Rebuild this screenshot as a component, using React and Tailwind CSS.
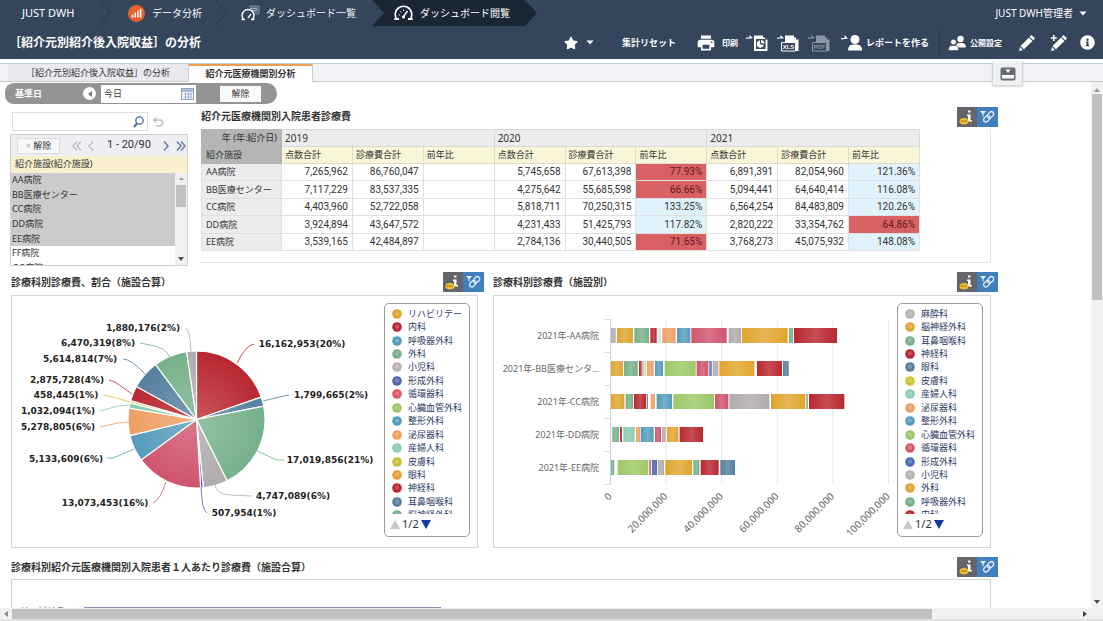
import React, { useState } from "react";
import { FaStar, FaInfoCircle } from "react-icons/fa";
import { MdPrint } from "react-icons/md";

const C = {
    red: "#b9272f",
    steel: "#55809f",
    green: "#76b18a",
    gray: "#b0abac",
    indigo: "#4a67b0",
    pink: "#cf546d",
    blue: "#559cbd",
    orange: "#ee9f62",
    mint: "#8accb4",
    yellow: "#d9c03a",
    gold: "#e0a52f",
    lime: "#9cc867",
};

const hospitals = ["AA病院", "BB医療センター", "CC病院", "DD病院", "EE病院", "FF病院", "GG病院"];

const tableRows = [
    ["AA病院", "7,265,962", "86,760,047", "", "5,745,658", "67,613,398", "77.93%", "6,891,391", "82,054,960", "121.36%"],
    ["BB医療センター", "7,117,229", "83,537,335", "", "4,275,642", "55,685,598", "66.66%", "5,094,441", "64,640,414", "116.08%"],
    ["CC病院", "4,403,960", "52,722,058", "", "5,818,711", "70,250,315", "133.25%", "6,564,254", "84,483,809", "120.26%"],
    ["DD病院", "3,924,894", "43,647,572", "", "4,231,433", "51,425,793", "117.82%", "2,820,222", "33,354,762", "64.86%"],
    ["EE病院", "3,539,165", "42,484,897", "", "2,784,136", "30,440,505", "71.65%", "3,768,273", "45,075,932", "148.08%"],
];

// value, label, colour, label centre, leader line
const slices = [
    [16162953, "16,162,953(20%)", C.red, 302, 344, "M237 363 Q246 345 254 344"],
    [1799665, "1,799,665(2%)", C.steel, 331, 395, "M263 401 L284 396 L289 395"],
    [17019856, "17,019,856(21%)", C.green, 330, 460, "M257 451 L277 460 L284 460"],
    [4747089, "4,747,089(6%)", C.gray, 293, 496, "M215 485 Q216 494 230 495 L252 496"],
    [507954, "507,954(1%)", C.indigo, 244, 513, "M201 487 Q202 511 207 513"],
    [13073453, "13,073,453(16%)", C.pink, 105, 503, "M166 482 Q160 500 153 503"],
    [5133609, "5,133,609(6%)", C.blue, 66, 459, "M134 449 L113 458 L107 458"],
    [5278805, "5,278,805(6%)", C.orange, 58, 427, "M129 422 L118 423 L100 427"],
    [1032094, "1,032,094(1%)", C.mint, 58, 411, "M129 405 L118 406 L100 411"],
    [458445, "458,445(1%)", C.yellow, 66, 395, "M130 402 L113 397 L103 395"],
    [2875728, "2,875,728(4%)", C.red, 67, 380, "M132 394 L115 382 L109 380"],
    [5614814, "5,614,814(7%)", C.steel, 80, 359, "M145 374 Q131 359 123 359"],
    [6470319, "6,470,319(8%)", C.green, 98, 343, "M170 358 Q166 347 150 345 L140 343"],
    [1880176, "1,880,176(2%)", C.gray, 143, 328, "M191 352 Q190 328 185 328"],
];

const pieLegend = [
    ["リハビリテー", C.gold],
    ["内科", C.red],
    ["呼吸器外科", C.blue],
    ["外科", C.green],
    ["小児科", "#c0b0b8"],
    ["形成外科", "#5467ad"],
    ["循環器科", "#dc5568"],
    ["心臓血管外科", C.lime],
    ["整形外科", C.blue],
    ["泌尿器科", C.orange],
    ["産婦人科", C.mint],
    ["皮膚科", "#c9bd35"],
    ["眼科", "#e8a03a"],
    ["神経科", C.red],
    ["耳鼻咽喉科", C.steel],
    ["脳神経外科", C.green],
];

const barLegend = [
    ["麻酔科", "#b5b5b5"],
    ["脳神経外科", C.gold],
    ["耳鼻咽喉科", C.green],
    ["神経科", C.red],
    ["眼科", C.steel],
    ["皮膚科", "#c9c832"],
    ["産婦人科", C.mint],
    ["泌尿器科", C.orange],
    ["整形外科", C.blue],
    ["心臓血管外科", C.lime],
    ["循環器科", "#d8576c"],
    ["形成外科", "#4c6fb4"],
    ["小児科", "#b8b4b0"],
    ["外科", C.gold],
    ["呼吸器外科", C.green],
    ["内科", C.red],
];

// segments are [start, end, colour]; 500 units = 60,000,000
const bars = [
    {
        label: "2021年-AA病院",
        y: 328,
        segs: [[0, 14, C.gray], [18, 66, C.gold], [70, 114, C.green], [118, 137, C.red], [140, 150, "#cfe6e2"], [154, 194, C.orange], [198, 238, C.blue], [241, 347, C.pink], [353, 390, C.gray], [393, 530, C.gold], [534, 546, C.green], [549, 678, C.red]],
    },
    {
        label: "2021年-BB医療センタ…",
        y: 361,
        segs: [[0, 36, C.gold], [39, 80, C.green], [84, 92, C.red], [94, 98, C.gray], [101, 104, C.yellow], [108, 128, C.orange], [132, 156, C.blue], [161, 254, C.lime], [257, 292, C.pink], [295, 302, C.indigo], [305, 322, C.gray], [325, 430, C.gold], [438, 513, C.red], [516, 533, C.steel]],
    },
    {
        label: "2021年-CC病院",
        y: 394,
        segs: [[0, 40, C.gold], [44, 66, C.green], [69, 105, C.red], [107, 111, C.steel], [119, 132, C.orange], [137, 183, C.blue], [187, 309, C.lime], [312, 352, C.pink], [355, 475, C.gray], [480, 583, C.gold], [586, 591, C.green], [594, 700, C.red]],
    },
    {
        label: "2021年-DD病院",
        y: 427,
        segs: [[4, 24, C.green], [27, 33, C.red], [37, 71, C.mint], [75, 87, C.orange], [89, 128, C.blue], [132, 150, C.pink], [153, 164, C.gray], [168, 202, C.gold], [206, 276, C.red]],
    },
    {
        label: "2021年-EE病院",
        y: 460,
        segs: [[0, 10, C.green], [20, 112, C.lime], [115, 120, C.pink], [123, 138, C.indigo], [141, 159, C.gray], [163, 243, C.gold], [247, 265, C.green], [269, 323, C.red], [328, 372, C.steel]],
    },
];

const ticks = ["0", "20,000,000", "40,000,000", "60,000,000", "80,000,000", "100,000,000"];

const Chevron = () => (
    <svg width="13" height="26" viewBox="0 0 13 26" fill="none" className="shrink-0">
        <path d="M0 0 L12 13 L0 26" stroke="#2c3b50" strokeWidth="2" />
        <path d="M1 0 L13 13 L1 26" stroke="#3d5069" strokeWidth="1" />
    </svg>
);

const Gauge = ({ size }) => (
    <svg width={size} height="16" viewBox="0 0 20 16" fill="none" stroke="currentColor">
        <path d="M3 14 A8.3 8.3 0 1 1 17 14" strokeWidth="1.7" />
        <path d="M0.8 14 H5.5 M14.5 14 H19.2" strokeWidth="1.8" />
        <path d="M10 11.5 L14 6" strokeWidth="1.5" />
        <circle cx="10" cy="12" r="1.5" fill="currentColor" stroke="none" />
        <path d="M5 10 H6.3 M6.8 6.3 L7.8 7.4 M10 4.5 V6" strokeWidth="1" />
    </svg>
);

const Pencil = ({ plus }) => (
    <svg width="18" height="18" viewBox="0 0 18 18" fill="currentColor">
        <path d="M13.5 1 L17 4.3 L15.2 6.2 L11.7 2.8 Z" />
        <path d="M11 3.5 L14.5 7 L6 15.3 L2.6 12 Z" />
        <path d="M2 12.9 L5.1 16 L1 17.2 Z" />
        {plus && <path d="M3 1 H4.6 V3.2 H6.8 V4.8 H4.6 V7 H3 V4.8 H0.8 V3.2 H3 Z" />}
    </svg>
);

const ExportIcon = ({ text }) => (
    <svg width="23" height="18" viewBox="0 0 23 18" fill="currentColor">
        <path d="M0 3.5 H3.5 V1 L7 4.2 L0 4.8 Z" />
        <path d="M8 1.5 H17 V3.5 H19 V5.5 H21.5 V17 H8 Z" />
        {text ? (
            <>
                <path d="M4 8 H19 V17.5 H4 Z" fill="#34455c" />
                <path d="M4.5 8.5 H18.5 V17 H4.5 Z" fill="none" stroke="currentColor" />
                <text x="11.5" y="15.2" textAnchor="middle" className="font-['Liberation_Sans',sans-serif] text-[6px] font-bold">
                    {text}
                </text>
            </>
        ) : (
            <>
                <path d="M10 5 H19.5 V15 H10 Z" fill="#34455c" />
                <path d="M14 10 V6.5 A3.6 3.6 0 1 0 17.8 11 Z" />
                <path d="M15 6 A3.3 3.3 0 0 1 18.5 9.5 L15 9 Z" />
            </>
        )}
    </svg>
);

const Caret = () => (
    <svg width="8" height="5" viewBox="0 0 8 5" fill="currentColor">
        <path d="M0.5 0.5 H7.5 L4 4.5 Z" />
    </svg>
);

const Badge = () => (
    <div className="flex h-5 shrink-0">
        <button aria-label="情報" className="w-5 bg-[#63656a]">
            <svg width="20" height="20" viewBox="0 0 20 20">
                <path d="M11 3.5 H13.5 V5.5 H11 Z M10 7.5 H13.5 V13 H15 V14.5 H10 V13 H11 V9 H10 Z" fill="#fff" />
                <ellipse cx="7" cy="14.2" rx="4.5" ry="3.3" fill="#f0bb2e" />
                <path d="M4 14.2 H10" stroke="#a56f12" strokeWidth="1.2" strokeDasharray="1.4 0.7" />
            </svg>
        </button>
        <button aria-label="リンク" className="w-[21px] bg-[#417fbd]">
            <svg width="21" height="20" viewBox="0 0 21 20" fill="none" stroke="#e8f1fa" strokeWidth="1.3">
                <path d="M3 4 H9 L6.5 7 V10 L5.5 9 V7 Z" fill="#e8f1fa" stroke="none" />
                <rect x="-3.6" y="-2.3" width="7.2" height="4.6" rx="2.3" transform="translate(13.5 7.8) rotate(-45)" />
                <rect x="-3.6" y="-2.3" width="7.2" height="4.6" rx="2.3" transform="translate(9.8 11.7) rotate(-45)" />
            </svg>
        </button>
    </div>
);

const Legend = ({ items }) => (
    <div className="mt-[7px] mr-[7px] flex h-[234px] w-[86px] shrink-0 flex-col rounded-[5px] border border-[#9a9a9a] bg-white">
        <div className="mt-[3px] h-[207px] overflow-hidden">
            <ul className="grid h-[215px] grid-rows-16">
                {items.map(([name, color]) => (
                    <li key={name} className="flex items-center gap-1.5 pl-[7px] text-[9px] leading-3 whitespace-nowrap text-[#2c3a66]">
                        <svg width="10" height="10" viewBox="0 0 10 10" className="shrink-0">
                            <circle cx="5" cy="5" r="4.8" fill={color} />
                            <circle cx="5" cy="4.5" r="2.2" fill="#fff" opacity="0.2" />
                        </svg>
                        {name}
                    </li>
                ))}
            </ul>
        </div>
        <div className="mt-px flex h-[18px] items-center gap-0.5 pl-[5px] text-[11px] leading-4 text-[#333]">
            <button aria-label="前へ">
                <svg width="10" height="9" viewBox="0 0 10 9"><path d="M5 0 L10 9 H0 Z" fill="#c9c9c9" /></svg>
            </button>
            1/2
            <button aria-label="次へ">
                <svg width="10" height="9" viewBox="0 0 10 9"><path d="M5 9 L10 0 H0 Z" fill="#13399a" /></svg>
            </button>
        </div>
    </div>
);

const PieChart = () => {
    const cx = 196.5;
    const cy = 419.5;
    const r = 68.5;
    const total = slices.reduce((sum, s) => sum + s[0], 0);
    let angle = 0;
    const paths = slices.map(([value, , color]) => {
        const from = angle;
        angle += (value / total) * Math.PI * 2;
        const big = angle - from > Math.PI ? 1 : 0;
        const x1 = cx + r * Math.sin(from);
        const y1 = cy - r * Math.cos(from);
        const x2 = cx + r * Math.sin(angle);
        const y2 = cy - r * Math.cos(angle);
        return <path key={value} d={`M${cx} ${cy} L${x1} ${y1} A${r} ${r} 0 ${big} 1 ${x2} ${y2} Z`} fill={color} stroke="#fff" strokeWidth="1.2" />;
    });

    return (
        <svg width="366" height="250" viewBox="12 296 366 250" className="shrink-0">
            <defs>
                <radialGradient id="sheen">
                    <stop offset="0" stopColor="#fff" stopOpacity="0.22" />
                    <stop offset="1" stopColor="#fff" stopOpacity="0" />
                </radialGradient>
            </defs>
            {paths}
            <circle cx={cx} cy={cy} r={r} fill="url(#sheen)" />
            {slices.map(([value, label, color, x, y, line]) => (
                <g key={value}>
                    <path d={line} fill="none" stroke={color} strokeOpacity="0.8" />
                    <text x={x} y={y + 3} textAnchor="middle" fill="#222" className="font-['DejaVu_Sans',sans-serif] text-[9px] font-bold">
                        {label}
                    </text>
                </g>
            ))}
        </svg>
    );
};

const BarChart = () => (
    <svg width="400" height="250" viewBox="494 296 400 250" className="shrink-0">
        <defs>
            <linearGradient id="gloss" x1="0" x2="1" y1="0" y2="0">
                <stop offset="0" stopColor="#fff" stopOpacity="0" />
                <stop offset="0.5" stopColor="#fff" stopOpacity="0.18" />
                <stop offset="1" stopColor="#fff" stopOpacity="0" />
            </linearGradient>
        </defs>
        {ticks.map((tick, i) => {
            const x = 610.5 + i * 55.6;
            return (
                <g key={tick}>
                    <path d={`M${x} 319 V484`} stroke={i === 0 ? "#c9d6e2" : "#e6e6ec"} />
                    <text transform={`translate(${x + 2} 497) rotate(-45)`} textAnchor="end" fill="#666" className="text-[10px]">
                        {tick}
                    </text>
                </g>
            );
        })}
        <path d="M604 319.5 H611 M604 352.5 H611 M604 385.5 H611 M604 418.5 H611 M604 451.5 H611 M604 484.5 H611" stroke="#dcdcdc" />
        {bars.map((bar) => (
            <g key={bar.label}>
                <text x="599" y={bar.y + 11} textAnchor="end" fill="#666" className="text-[9px]">
                    {bar.label}
                </text>
                {bar.segs.map(([from, to, color]) => (
                    <g key={from}>
                        <rect x={611 + from / 3} y={bar.y} width={(to - from) / 3} height="15" fill={color} />
                        <rect x={611 + from / 3} y={bar.y} width={(to - from) / 3} height="15" fill="url(#gloss)" />
                    </g>
                ))}
            </g>
        ))}
    </svg>
);

const rateColor = (value) => {
    if (!value) return "bg-white";
    return parseFloat(value) < 100 ? "bg-[#d96063] text-[#5c1c20]" : "bg-[#e0f2fc]";
};

const CrossTable = () => (
    <table className="w-[719px] table-fixed border-collapse text-[9px] leading-3 text-[#333]">
        <colgroup>
            <col className="w-20" />
            {tableRows[0].slice(1).map((_, i) => (
                <col key={i} />
            ))}
        </colgroup>
        <thead>
            <tr className="h-[17px]">
                <th className="border border-[#b4b4b4] bg-[#b5b5b5] pr-1 text-right font-normal whitespace-nowrap">年 (年:紹介日)</th>
                {["2019", "2020", "2021"].map((year) => (
                    <th key={year} colSpan={3} className="border border-[#d9d9d9] bg-[#ececec] pl-[3px] text-left text-[10px] font-normal">
                        {year}
                    </th>
                ))}
            </tr>
            <tr className="h-[17px]">
                <th className="border border-[#b4b4b4] bg-[#b5b5b5] pl-1 text-left font-normal">紹介施設</th>
                {[0, 1, 2].map((n) =>
                    ["点数合計", "診療費合計", "前年比"].map((name) => (
                        <th key={name + n} className="border border-[#dedccb] bg-[#f9f5d9] pl-[3px] text-left font-normal">
                            {name}
                        </th>
                    ))
                )}
            </tr>
        </thead>
        <tbody>
            {tableRows.map(([name, ...values]) => (
                <tr key={name} className="h-[17px] even:h-[18px]">
                    <th className="border border-[#e0e0e0] bg-[#ececec] pl-1 text-left font-normal whitespace-nowrap">{name}</th>
                    {values.map((value, i) => (
                        <td
                            key={i}
                            className={`border border-[#e0e0e0] pr-1 text-right font-[Roboto,sans-serif] text-[10px] ${i % 3 === 2 ? rateColor(value) : "bg-white"}`}
                        >
                            {value}
                        </td>
                    ))}
                </tr>
            ))}
        </tbody>
    </table>
);

const Header = () => (
    <header className="h-[59px] shrink-0 bg-[#34455c] text-white">
        <div className="flex h-[26px] items-center justify-between text-[10px] whitespace-nowrap">
            <nav className="flex h-full items-center">
                <a href="#" className="w-[100px] pl-[22px] text-[11px]">JUST DWH</a>
                <Chevron />
                <a href="#" className="flex w-[103px] items-center gap-[7px] pl-[15px]">
                    <svg width="17" height="17" viewBox="0 0 17 17">
                        <circle cx="8.5" cy="8.5" r="8.5" fill="#e8622f" />
                        <path d="M4.5 12.5 V9.5 M7.2 12.5 V7.5 M9.9 12.5 V5.5 M12.6 12.5 V4" stroke="#fff" strokeWidth="1.5" />
                    </svg>
                    データ分析
                </a>
                <Chevron />
                <a href="#" className="flex w-[143px] items-center gap-1.5 pl-3 text-[#f0f3f6]">
                    <svg width="19" height="16" viewBox="0 0 19 16" fill="none">
                        <path d="M8 1 H18 V9 H13" stroke="#7d8a9b" fill="#5c6b7f" />
                        <path d="M9 3.5 H16 M11 5.5 H16" stroke="#a7b1bd" />
                        <path d="M2.5 14.5 A6 6 0 1 1 11.5 14.5" stroke="#fff" strokeWidth="1.4" />
                        <path d="M7 13 L10 9" stroke="#fff" strokeWidth="1.3" />
                        <path d="M0.5 14.5 H4 M10 14.5 H13.5" stroke="#fff" strokeWidth="1.3" />
                    </svg>
                    ダッシュボード一覧
                </a>
                <a
                    href="#"
                    aria-current="page"
                    className="flex h-full w-[165px] items-center gap-1.5 bg-[#1b2635] pl-[21px] [clip-path:polygon(0_0,153px_0,100%_50%,153px_100%,0_100%,12px_50%)]"
                >
                    <Gauge size="21" />
                    ダッシュボード閲覧
                </a>
            </nav>
            <button className="mr-4 flex items-center gap-1.5">
                JUST DWH管理者
                <Caret />
            </button>
        </div>
        <div className="flex h-[33px] items-center justify-between">
            <h1 className="pl-[9px] text-[12px] font-bold whitespace-nowrap">［紹介元別紹介後入院収益］の分析</h1>
            <div className="flex items-center pr-2 text-[9px] font-bold whitespace-nowrap">
                <button aria-label="お気に入り" className="flex items-center gap-2">
                    <FaStar size={14} />
                    <Caret />
                </button>
                <button className="ml-7">集計リセット</button>
                <button className="ml-5 flex items-center gap-1.5 text-[8px]">
                    <MdPrint size={20} />
                    印刷
                </button>
                <button aria-label="画像出力" className="ml-2"><ExportIcon /></button>
                <button aria-label="Excel出力" className="ml-2"><ExportIcon text="XLS" /></button>
                <button aria-label="PDF出力" className="ml-2 text-[#8b97a6]"><ExportIcon text="PDF" /></button>
                <button className="ml-2.5 flex items-center gap-[3px]">
                    <svg width="22" height="18" viewBox="0 0 22 18" fill="currentColor">
                        <path d="M0 4 H3.5 V1 L7 4.5 L0 5.5 Z" />
                        <circle cx="14" cy="5.5" r="4.5" />
                        <path d="M7 16.5 Q7 10.5 12 10.5 H16 Q21 10.5 21 16.5 Z" />
                    </svg>
                    レポートを作る
                </button>
                <span className="ml-2.5 h-7 w-px bg-[#2a384b]" />
                <button className="ml-2 flex items-center gap-1 text-[8px]">
                    <svg width="18" height="16" viewBox="0 0 18 16" fill="currentColor">
                        <circle cx="12.5" cy="4" r="3.2" />
                        <path d="M8.5 12.5 Q7.5 8 11 8 H14 Q18 8 17.8 12.5 Z" />
                        <circle cx="5.5" cy="7" r="2.8" stroke="#34455c" strokeWidth="0.6" />
                        <path d="M0.5 15.5 Q0.5 10.5 4 10.5 H7 Q10.5 10.5 10.5 15.5 Z" stroke="#34455c" strokeWidth="0.6" />
                    </svg>
                    公開設定
                </button>
                <button aria-label="編集" className="ml-4"><Pencil /></button>
                <button aria-label="追加" className="ml-3.5"><Pencil plus /></button>
                <button aria-label="ヘルプ" className="ml-3"><FaInfoCircle size={15} /></button>
            </div>
        </div>
    </header>
);

const App = () => {
    const [keyword, setKeyword] = useState("");
    const [baseDate, setBaseDate] = useState("今日");

    return (
        <div className="flex h-screen flex-col overflow-hidden bg-white font-['Noto_Sans','Noto_Sans_CJK_JP',sans-serif] text-[#333]">
            <Header />

            {/* Tabs */}
            <div className="relative mt-1 flex h-[19px] shrink-0 items-end border-t border-b border-[#c6cad0] bg-[#f3f3f7] pl-2 text-[9px] whitespace-nowrap">
                <button className="h-[17px] w-[181px] border-r border-[#cfcfd6] bg-[#e9e9ef] leading-4">［紹介元別紹介後入院収益］の分析</button>
                <button className="-mb-px h-[18px] w-[124px] border-t-2 border-r border-t-[#eda04c] border-r-[#cccccc] bg-white leading-4 font-bold">
                    紹介元医療機関別分析
                </button>
                <button aria-label="ツールバー" className="absolute -top-0.5 right-20 flex h-6 w-[31px] items-center justify-center border border-t-0 border-[#d5d5d8] bg-[#eef0f2] shadow-sm">
                    <svg width="16" height="14" viewBox="0 0 16 14">
                        <rect x="0.5" y="0.5" width="15" height="13" rx="2" fill="#686d73" />
                        <rect x="2" y="8" width="12" height="3.5" fill="#fff" />
                        <path d="M5.5 2.5 H10.5 L8 6 Z" fill="#fff" />
                    </svg>
                </button>
            </div>

            <div className="flex min-h-0 flex-1">
                <main className="min-w-0 flex-1 overflow-hidden">
                    {/* Base date filter */}
                    <div className="mt-px ml-[5px] flex h-[21px] w-[272px] items-center rounded-l-[10px] rounded-r-[12px] bg-[#949494] pl-2.5 text-[9px]">
                        <label htmlFor="base-date" className="w-[68px] font-bold text-white">基準日</label>
                        <button aria-label="前の日" className="flex h-[13px] w-[13px] items-center justify-center rounded-full bg-white">
                            <svg width="4" height="6" viewBox="0 0 4 6"><path d="M4 0 V6 L0 3 Z" fill="#777" /></svg>
                        </button>
                        <div className="ml-[5px] flex h-[18px] w-[95px] items-center bg-white pr-0.5">
                            <input
                                id="base-date"
                                value={baseDate}
                                onChange={(e) => setBaseDate(e.target.value)}
                                className="w-0 min-w-0 flex-1 pl-[3px] text-[9px] outline-none"
                            />
                            <svg width="13" height="12" viewBox="0 0 13 12" fill="none" stroke="#8fa5c6">
                                <rect x="0.5" y="0.5" width="12" height="11" fill="#eef3fa" />
                                <path d="M0.5 2.5 H12.5" strokeWidth="2" />
                                <path d="M3 6 H11 M3 9 H11 M4.5 4 V11 M7.5 4 V11 M10 4 V11" strokeWidth="0.7" />
                            </svg>
                        </div>
                        <button className="ml-6 h-4 w-[41px] bg-[#fafafa]">解除</button>
                    </div>

                    <div className="mt-[3px] mr-[100px] ml-2.5 flex h-[158px] gap-[13px]">
                        {/* Facility list */}
                        <aside className="w-[178px] shrink-0">
                            <div className="mt-[5px] ml-0.5 flex h-[19px] items-center">
                                <div className="flex h-full w-[136px] items-center border border-[#e0e0e4] pr-[3px]">
                                    <input
                                        aria-label="施設検索"
                                        value={keyword}
                                        onChange={(e) => setKeyword(e.target.value)}
                                        className="w-0 min-w-0 flex-1 px-1 text-[9px] outline-none"
                                    />
                                    <svg width="11" height="12" viewBox="0 0 11 12" fill="none" stroke="#4d6a99">
                                        <circle cx="6.5" cy="4.5" r="3.7" strokeWidth="1.3" />
                                        <path d="M4 7.5 L0.8 11" strokeWidth="2" />
                                    </svg>
                                </div>
                                <button aria-label="元に戻す" className="ml-1">
                                    <svg width="12" height="10" viewBox="0 0 12 10" fill="none" stroke="#c3c3c9" strokeWidth="1.5">
                                        <path d="M4.5 0.5 L1.5 3 L4.5 5.5 M1.5 3 H8 A2.8 2.8 0 0 1 8 8.7 H4" />
                                    </svg>
                                </button>
                            </div>
                            <div className="mt-[3px] h-[132px] border border-[#d0d0d4]">
                                <div className="flex h-[21px] items-center bg-[#efeff3] pl-1.5 text-[9px]">
                                    <button className="h-4 w-[43px] border border-[#dcdcdf] bg-[#f8f8fa] leading-3">
                                        <span className="text-[#aaa]">× </span>解除
                                    </button>
                                    <svg width="24" height="10" viewBox="0 0 24 10" fill="none" stroke="#b9bfcc" strokeWidth="1.4" className="ml-3">
                                        <path d="M5 0.5 L1 5 L5 9.5 M9 0.5 L5 5 L9 9.5 M21 0.5 L17 5 L21 9.5" />
                                    </svg>
                                    <span className="ml-[11px] font-[Roboto,sans-serif] text-[11px] whitespace-nowrap">1 - 20/90</span>
                                    <svg width="24" height="10" viewBox="0 0 24 10" fill="none" stroke="#6580a8" strokeWidth="1.5" className="ml-3">
                                        <path d="M1 0.5 L5 5 L1 9.5 M14 0.5 L18 5 L14 9.5 M18 0.5 L22 5 L18 9.5" />
                                    </svg>
                                </div>
                                <div className="h-[17px] bg-[#f9f0cf] pl-1 text-[9px] leading-4">紹介施設(紹介施設)</div>
                                <div className="flex h-[92px] overflow-hidden">
                                    <ul className="grid h-[102px] flex-1 grid-rows-7 text-[9px]">
                                        {hospitals.map((name, i) => (
                                            <li key={name} className={`flex items-center pl-px leading-3 ${i < 5 ? "bg-[#cbcbcb]" : "bg-white"}`}>
                                                {name}
                                            </li>
                                        ))}
                                    </ul>
                                    <div className="flex h-[92px] w-3 flex-col items-center bg-[#f1f1f1] py-1">
                                        <svg width="5" height="4" viewBox="0 0 5 4"><path d="M2.5 0 L5 3 H0 Z" fill="#a0a0a0" /></svg>
                                        <div className="mt-1 h-[22px] w-2.5 bg-[#c1c1c1]" />
                                        <svg width="6" height="4" viewBox="0 0 6 4" className="mt-auto"><path d="M3 4 L6 0 H0 Z" fill="#505050" /></svg>
                                    </div>
                                </div>
                            </div>
                        </aside>

                        <section className="min-w-0 flex-1">
                            <div className="-mr-[7px] flex h-[22px] items-start justify-between">
                                <h2 className="text-[10px] leading-[18px] font-bold">紹介元医療機関別入院患者診療費</h2>
                                <Badge />
                            </div>
                            <div className="h-[134px] border-r border-b border-[#e4e4e8]">
                                <CrossTable />
                            </div>
                        </section>
                    </div>

                    <div className="mt-[7px] mr-[100px] ml-[11px] flex h-[275px] gap-[15px]">
                        <section className="w-[467px] shrink-0">
                            <div className="-mr-1.5 flex h-[23px] items-start justify-between">
                                <h2 className="text-[10px] leading-5 font-bold">診療科別診療費、割合（施設合算）</h2>
                                <Badge />
                            </div>
                            <div className="flex h-[253px] justify-between border border-[#d4d4d8]">
                                <PieChart />
                                <Legend items={pieLegend} />
                            </div>
                        </section>
                        <section className="min-w-0 flex-1">
                            <div className="-mr-[7px] flex h-[23px] items-start justify-between">
                                <h2 className="text-[10px] leading-5 font-bold">診療科別診療費（施設別）</h2>
                                <Badge />
                            </div>
                            <div className="flex h-[253px] justify-between border border-[#d4d4d8]">
                                <BarChart />
                                <Legend items={barLegend} />
                            </div>
                        </section>
                    </div>

                    <section className="mt-2.5 mr-[100px] ml-[11px]">
                        <div className="-mr-[7px] flex h-[22px] items-start justify-between">
                            <h2 className="text-[10px] leading-5 font-bold">診療科別紹介元医療機関別入院患者１人あたり診療費（施設合算）</h2>
                            <Badge />
                        </div>
                        <div className="flex h-[150px] items-start border border-[#d4d4d8] pt-[25px]">
                            <span className="w-[64px] pl-2 text-[9px] leading-3 whitespace-nowrap text-[#777]">リハビリテー</span>
                            <div className="mt-0.5 ml-2 h-4 w-[357px] bg-[#8b93b5]" />
                        </div>
                    </section>
                </main>

                {/* Vertical scrollbar */}
                <div className="flex w-3 shrink-0 flex-col items-center bg-[#f1f1f1] py-1">
                    <svg width="6" height="4" viewBox="0 0 6 4" className="mt-0.5"><path d="M3 0 L6 4 H0 Z" fill="#9a9a9a" /></svg>
                    <div className="mt-0.5 h-[206px] w-2.5 bg-[#c1c1c1]" />
                    <svg width="6" height="4" viewBox="0 0 6 4" className="mt-auto"><path d="M3 4 L6 0 H0 Z" fill="#505050" /></svg>
                </div>
            </div>

            {/* Horizontal scrollbar */}
            <div className="flex h-[13px] shrink-0 items-center border-b-2 border-[#e2e2e4] bg-[#f1f1f1] px-1">
                <svg width="4" height="6" viewBox="0 0 4 6"><path d="M4 0 V6 L0 3 Z" fill="#8a8a8a" /></svg>
                <div className="ml-1 h-2.5 w-[84%] bg-[#c1c1c1]" />
                <svg width="4" height="6" viewBox="0 0 4 6" className="mr-3 ml-auto"><path d="M0 0 V6 L4 3 Z" fill="#404040" /></svg>
            </div>
        </div>
    );
};

export default App;
